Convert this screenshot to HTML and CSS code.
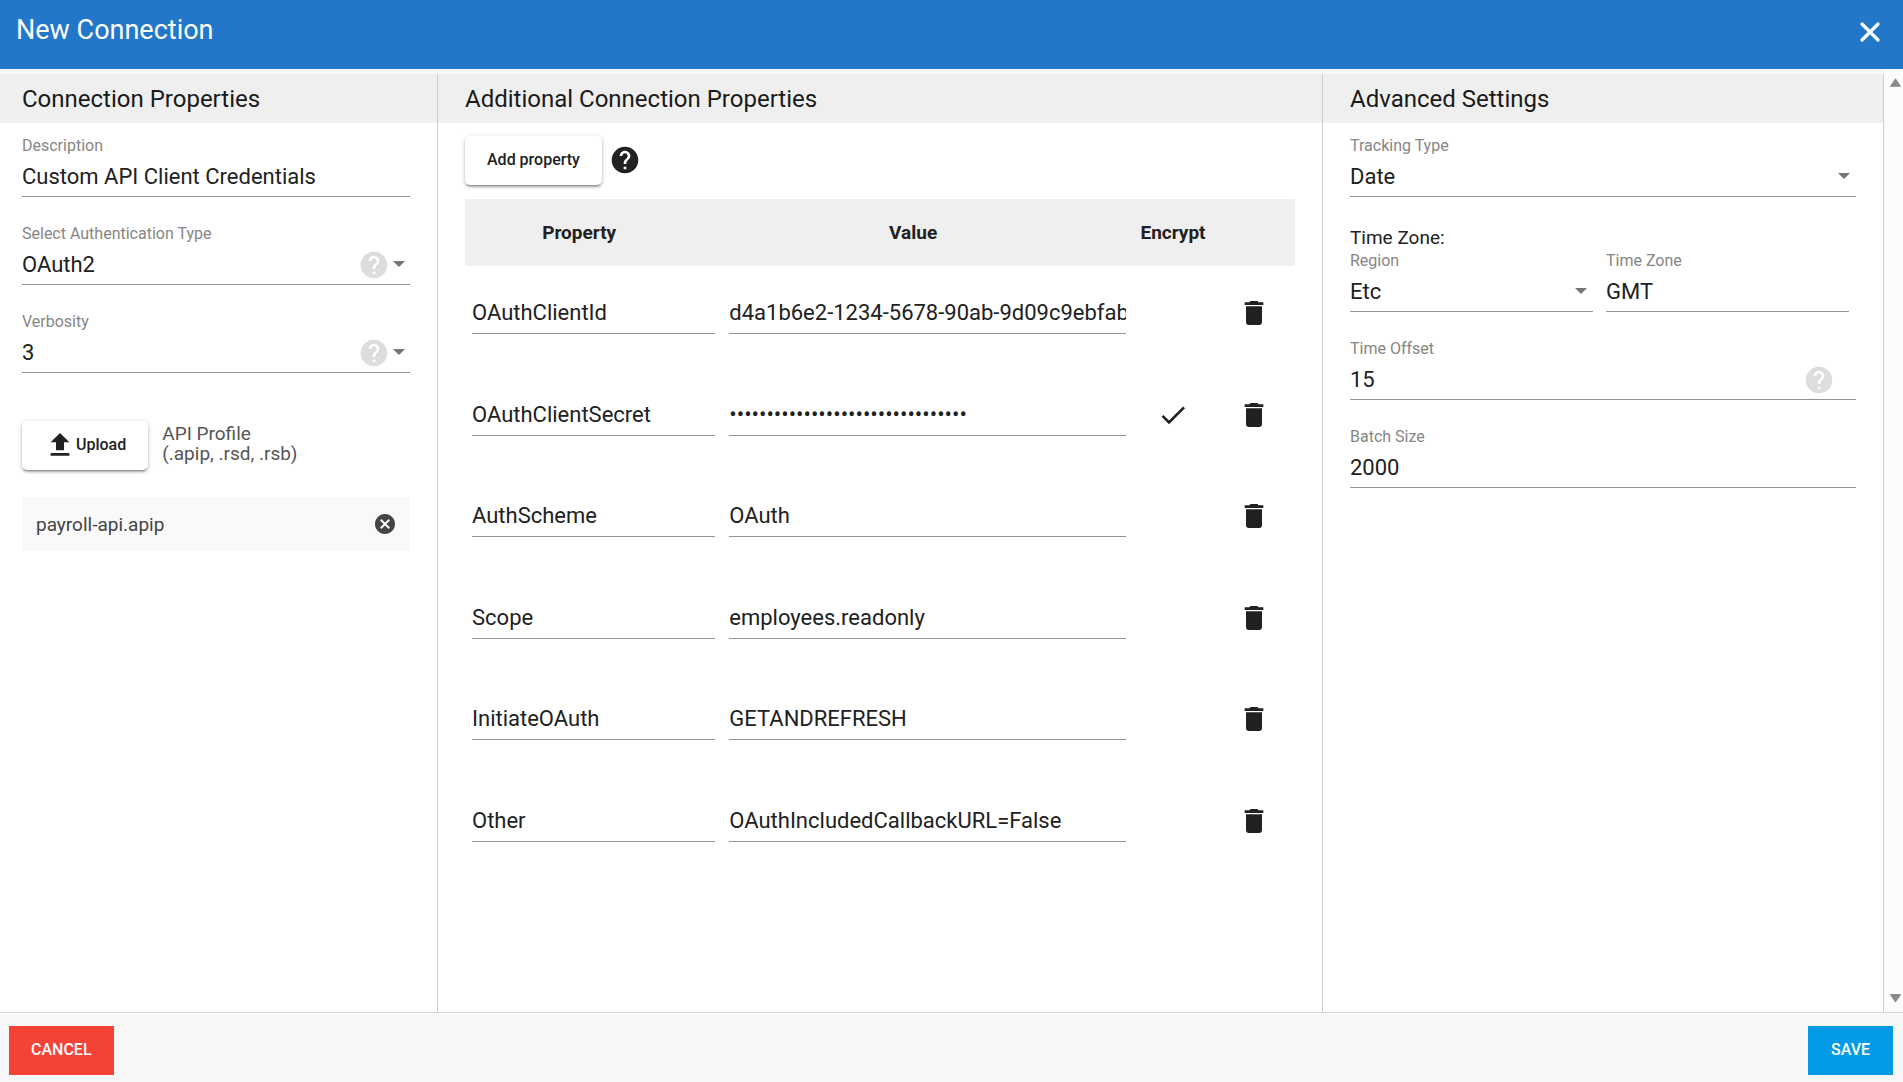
FILE: index.html
```html
<!DOCTYPE html>
<html lang="en">
	<head>
		<meta charset="utf-8">
		<title>New Connection</title>
		<link rel="stylesheet" href="styles.css">
	</head>
	<body>
		<!-- icons used more than once -->
		<svg class="sprite" width="0" height="0">
			<symbol id="help" viewBox="0 0 24 24"><path d="M12 2C6.48 2 2 6.48 2 12s4.48 10 10 10 10-4.480 10-10S17.520 2 12 2zm1 17h-2v-2h2v2zm2.070-7.750l-.9.920C13.450 12.900 13 13.500 13 15h-2v-.5c0-1.100.45-2.100 1.170-2.830l1.240-1.260c.37-.36.59-.86.59-1.410 0-1.100-.9-2-2-2s-2 .9-2 2H8c0-2.210 1.790-4 4-4s4 1.790 4 4c0 .88-.36 1.680-.93 2.250z"/></symbol>
			<symbol id="trash" viewBox="0 0 24 24"><path d="M6 19c0 1.100.9 2 2 2h8c1.100 0 2-.9 2-2V7H6v12zM19 4h-3.500l-1-1h-5l-1 1H5v2h14V4z"/></symbol>
		</svg>

		<header class="topbar">
			<h1>New Connection</h1>
			<button class="icon-btn close" aria-label="Close">
				<svg class="icon" viewBox="0 0 24 24"><path d="M6 6l12 12M18 6L6 18" fill="none" stroke="#fff" stroke-width="2.400" stroke-linecap="round"/></svg>
			</button>
		</header>

		<main class="content">
			<div class="columns">
				<section class="column left">
					<h2>Connection Properties</h2>
					<div class="column-body">
						<div class="field">
							<label for="description">Description</label>
							<div class="control"><input id="description" type="text" value="Custom API Client Credentials"></div>
						</div>
						<div class="field">
							<label for="authtype">Select Authentication Type</label>
							<div class="control drop">
								<select id="authtype"><option>OAuth2</option></select>
								<svg class="icon hint"><use href="#help"/></svg>
							</div>
						</div>
						<div class="field">
							<label for="verbosity">Verbosity</label>
							<div class="control drop">
								<select id="verbosity"><option>3</option></select>
								<svg class="icon hint"><use href="#help"/></svg>
							</div>
						</div>
						<div class="upload">
							<button class="raised">
								<svg class="icon" viewBox="0 0 24 24"><path d="M9 16h6v-6h4l-7-7-7 7h4zm-4 2h14v2H5z"/></svg>
								Upload
							</button>
							<p>API Profile<br>(.apip, .rsd, .rsb)</p>
						</div>
						<div class="file">
							<span>payroll-api.apip</span>
							<button class="icon-btn remove" aria-label="Remove file">
								<svg class="icon" viewBox="0 0 24 24"><path d="M12 2C6.470 2 2 6.470 2 12s4.470 10 10 10 10-4.470 10-10S17.530 2 12 2zm5 13.590L15.590 17 12 13.410 8.410 17 7 15.590 10.590 12 7 8.410 8.410 7 12 10.590 15.590 7 17 8.410 13.410 12 17 15.590z"/></svg>
							</button>
						</div>
					</div>
				</section>

				<section class="column middle">
					<h2>Additional Connection Properties</h2>
					<div class="column-body">
						<div class="toolbar">
							<button class="raised">Add property</button>
							<svg class="icon"><use href="#help"/></svg>
						</div>
						<table class="properties">
							<colgroup>
								<col class="col-name">
								<col>
								<col class="col-encrypt">
								<col class="col-delete">
							</colgroup>
							<thead>
								<tr>
									<th class="wide">Property</th>
									<th class="wide">Value</th>
									<th>Encrypt</th>
									<th></th>
								</tr>
							</thead>
							<tbody>
								<tr>
									<td><div class="control"><input type="text" aria-label="Property" value="OAuthClientId"></div></td>
									<td><div class="control"><input type="text" aria-label="Value" value="d4a1b6e2-1234-5678-90ab-9d09c9ebfabc"></div></td>
									<td></td>
									<td><button class="icon-btn" aria-label="Delete"><svg class="icon"><use href="#trash"/></svg></button></td>
								</tr>
								<tr>
									<td><div class="control"><input type="text" aria-label="Property" value="OAuthClientSecret"></div></td>
									<td><div class="control"><input type="password" aria-label="Value" value="a1b2c3d4e5f6a7b8c9d0e1f2a3b4c5d6"></div></td>
									<td><button class="icon-btn" aria-label="Encrypted"><svg class="icon" viewBox="0 0 24 24"><path d="M9 16.200L4.800 12l-1.400 1.400L9 19 21 7l-1.400-1.400L9 16.200z"/></svg></button></td>
									<td><button class="icon-btn" aria-label="Delete"><svg class="icon"><use href="#trash"/></svg></button></td>
								</tr>
								<tr>
									<td><div class="control"><input type="text" aria-label="Property" value="AuthScheme"></div></td>
									<td><div class="control"><input type="text" aria-label="Value" value="OAuth"></div></td>
									<td></td>
									<td><button class="icon-btn" aria-label="Delete"><svg class="icon"><use href="#trash"/></svg></button></td>
								</tr>
								<tr>
									<td><div class="control"><input type="text" aria-label="Property" value="Scope"></div></td>
									<td><div class="control"><input type="text" aria-label="Value" value="employees.readonly"></div></td>
									<td></td>
									<td><button class="icon-btn" aria-label="Delete"><svg class="icon"><use href="#trash"/></svg></button></td>
								</tr>
								<tr>
									<td><div class="control"><input type="text" aria-label="Property" value="InitiateOAuth"></div></td>
									<td><div class="control"><input type="text" aria-label="Value" value="GETANDREFRESH"></div></td>
									<td></td>
									<td><button class="icon-btn" aria-label="Delete"><svg class="icon"><use href="#trash"/></svg></button></td>
								</tr>
								<tr>
									<td><div class="control"><input type="text" aria-label="Property" value="Other"></div></td>
									<td><div class="control"><input type="text" aria-label="Value" value="OAuthIncludedCallbackURL=False"></div></td>
									<td></td>
									<td><button class="icon-btn" aria-label="Delete"><svg class="icon"><use href="#trash"/></svg></button></td>
								</tr>
							</tbody>
						</table>
					</div>
				</section>

				<section class="column right">
					<h2>Advanced Settings</h2>
					<div class="column-body">
						<div class="field">
							<label for="tracking">Tracking Type</label>
							<div class="control drop"><select id="tracking"><option>Date</option></select></div>
						</div>
						<p class="group-title">Time Zone:</p>
						<div class="field-row">
							<div class="field">
								<label for="region">Region</label>
								<div class="control drop"><select id="region"><option>Etc</option></select></div>
							</div>
							<div class="field">
								<label for="timezone">Time Zone</label>
								<div class="control"><select id="timezone"><option>GMT</option></select></div>
							</div>
						</div>
						<div class="field">
							<label for="offset">Time Offset</label>
							<div class="control">
								<input id="offset" type="text" value="15">
								<svg class="icon hint"><use href="#help"/></svg>
							</div>
						</div>
						<div class="field">
							<label for="batch">Batch Size</label>
							<div class="control"><input id="batch" type="text" value="2000"></div>
						</div>
					</div>
				</section>
			</div>
			<div class="scrollbar">
				<svg viewBox="0 0 12 10"><path d="M6 2L10.500 8.500H1.500z"/></svg>
				<svg viewBox="0 0 12 10"><path d="M6 8L10.500 1.500H1.500z"/></svg>
			</div>
		</main>

		<footer class="actions">
			<button class="cancel">CANCEL</button>
			<button class="save">SAVE</button>
		</footer>
	</body>
</html>
```
FILE: styles.css
```css
* {
	box-sizing: border-box;
}
html, body {
	height: 100%;
	margin: 0;
}
body {
	display: flex;
	flex-direction: column;
	background: #f7f7f7;
	color: #212121;
	font-family: Roboto, sans-serif;
	font-size: 19px;
}
h1, h2, p {
	margin: 0;
	font-weight: 400;
}
button, input, select {
	font-family: inherit;
	color: inherit;
}
button {
	border: none;
	cursor: pointer;
}
.sprite {
	position: absolute;
}
.icon {
	display: block;
	flex: none;
	width: 32px;
	height: 32px;
	fill: currentColor;
}
.icon-btn {
	padding: 0;
	background: none;
}

/* top bar */
.topbar {
	display: flex;
	justify-content: space-between;
	align-items: flex-start;
	height: 69px;
	padding: 13px 17px 0 16px;
	background: #2277c9;
	color: #fff;
}
.topbar h1 {
	font-size: 27px;
	line-height: 34px;
}
.close {
	padding-top: 3px;
}

/* columns */
.content {
	flex: 1;
	display: flex;
	min-height: 0;
}
.columns {
	flex: 1;
	display: grid;
	grid-template-columns: 438fr 885fr 561fr;
	margin-top: 5px;
	background: #fff;
}
.column {
	min-width: 0;
	border-right: 1px solid #ccc;
}
.column h2 {
	padding: 2px 27px 0;
	background: #efefef;
	font-size: 24px;
	line-height: 47px;
	color: #1a1a1a;
}
.column-body {
	padding: 12px 27px 0;
}
.left h2,
.left .column-body {
	padding-left: 22px;
}

/* form fields */
.field {
	margin-bottom: 26px;
}
.field label {
	display: block;
	font-size: 16px;
	line-height: 22px;
	color: #868686;
}
.control {
	position: relative;
	display: flex;
	height: 42px;
	border-bottom: 1px solid #949494;
}
.field .control {
	height: 40px;
}
.control input,
.control select {
	flex: 1;
	min-width: 0;
	padding: 0;
	border: none;
	outline: none;
	background: none;
	appearance: none;
	font-size: 22px;
}
.drop::after {
	content: "";
	position: absolute;
	right: 6px;
	bottom: 17px;
	border: 6px solid transparent;
	border-top-color: #757575;
	border-bottom: none;
	pointer-events: none;
}
.hint {
	position: absolute;
	right: 21px;
	bottom: 3px;
	fill: #ddd;
}
.left .hint {
	right: 20px;
}
.left .drop::after {
	right: 5px;
}
.group-title {
	padding-top: 2px;
	line-height: 25px;
}
.field-row {
	display: grid;
	grid-template-columns: 1fr 1fr;
	gap: 13px;
	padding-right: 7px;
}

.raised {
	display: flex;
	align-items: center;
	height: 49px;
	padding: 0 22px 2px;
	border-radius: 5px;
	background: #fff;
	box-shadow: 0 3px 2px -2px rgba(0,0,0,.3), 0 2px 3px rgba(0,0,0,.2), 0 1px 5px rgba(0,0,0,.15);
	font-size: 16px;
	font-weight: 500;
}
.upload {
	display: flex;
	align-items: flex-start;
	gap: 14px;
	margin-top: 48px;
}
.upload p {
	padding-top: 3px;
	line-height: 20px;
	color: #555;
}
.upload .raised {
	margin-bottom: 27px;
}
.file {
	display: flex;
	justify-content: space-between;
	align-items: center;
	height: 54px;
	padding: 0 13px 0 14px;
	background: #f9f9f9;
	color: #444;
}
.remove .icon {
	width: 24px;
	height: 24px;
}

/* property table */
.toolbar {
	display: flex;
	align-items: flex-start;
	gap: 7px;
	margin: 1px 0 14px;
}
.toolbar .icon {
	margin-top: 8px;
}
.properties {
	width: 100%;
	height: 676px;
	table-layout: fixed;
	border-collapse: collapse;
}
.col-name {
	width: 31%;
}
.col-encrypt {
	width: 80px;
}
.col-delete {
	width: 82px;
}
.properties th {
	height: 67px;
	padding: 0;
	background: #efefef;
	font-size: 19px;
	font-weight: 700;
}
.properties th.wide {
	padding-right: 29px;
}
.properties td {
	padding: 26px 7px 0;
	vertical-align: top;
}
.properties .icon-btn {
	display: block;
	margin: 5px auto 0;
}

/* scrollbar */
.scrollbar {
	display: flex;
	flex-direction: column;
	justify-content: space-between;
	width: 19px;
	padding: 8px 1px 8px 5px;
	background: #fcfcfc;
}
.scrollbar svg {
	width: 13px;
	fill: #8a8a8a;
	stroke: #8a8a8a;
	stroke-linejoin: round;
}

/* footer */
.actions {
	display: flex;
	justify-content: space-between;
	height: 70px;
	padding: 13px 10px 0 9px;
	border-top: 1px solid #d6d9e3;
}
.actions button {
	height: 49px;
	padding: 0 22px 2px;
	color: #fff;
	font-size: 16px;
	font-weight: 500;
}
.actions .cancel {
	background: #f44336;
}
.actions .save {
	padding: 0 23px 2px;
	background: #039be5;
}
```
